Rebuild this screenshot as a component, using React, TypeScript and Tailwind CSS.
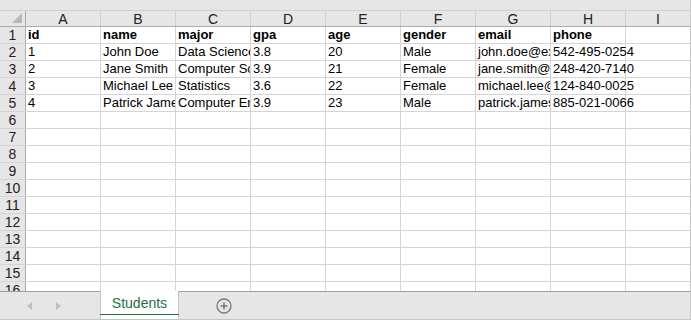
const cols = ["A", "B", "C", "D", "E", "F", "G", "H"];

const rows: string[][] = [
  ["id", "name", "major", "gpa", "age", "gender", "email", "phone"],
  ["1", "John Doe", "Data Science", "3.8", "20", "Male", "john.doe@example.com", "542-495-0254"],
  ["2", "Jane Smith", "Computer Science", "3.9", "21", "Female", "jane.smith@example.com", "248-420-7140"],
  ["3", "Michael Lee", "Statistics", "3.6", "22", "Female", "michael.lee@example.com", "124-840-0025"],
  ["4", "Patrick James", "Computer Engineering", "3.9", "23", "Male", "patrick.james@example.com", "885-021-0066"],
];

const rowCount = 16;

export default function App() {
  return (
    <div
      className="w-[691px] h-[320px] flex flex-col bg-white overflow-hidden text-[13px] text-black"
      style={{ fontFamily: '"Liberation Sans", Arial, sans-serif' }}
    >
      {/* sheet area */}
      <div className="h-[291px] overflow-hidden border-r border-[#c6c6c6]">
        {/* top band */}
        <div className="h-[11px] bg-[#e6e6e6] border-b border-[#d0d0d0]" />

        {/* column headers */}
        <div className="flex h-[16px] bg-[#e6e6e6] border-b border-[#ababab]">
          <div className="w-[26px] shrink-0 border-r border-[#ababab] relative">
            <svg width="12" height="12" className="absolute left-[11px] top-[1px]" viewBox="0 0 12 12">
              <polygon points="11,1 11,11 1,11" fill="#b8b8b8" />
            </svg>
          </div>
          {cols.map((c) => (
            <div
              key={c}
              className="w-[75px] shrink-0 border-r border-[#d0d0d0] flex items-center justify-center text-[14px] text-[#222] leading-none"
            >
              {c}
            </div>
          ))}
          <div className="flex-1 flex items-center justify-center text-[14px] text-[#222] leading-none">I</div>
        </div>

        {/* rows */}
        {Array.from({ length: rowCount }).map((_, r) => {
          const data = rows[r];
          return (
            <div key={r} className="flex h-[17px] border-b border-[#d4d4d4]">
              <div className="w-[26px] shrink-0 bg-[#e6e6e6] border-r border-[#ababab] flex items-center justify-center text-[14px] text-[#222] leading-none">
                {r + 1}
              </div>
              {cols.map((c, i) => (
                <div
                  key={c}
                  className={`w-[75px] shrink-0 border-r border-[#d4d4d4] pl-[2px] whitespace-nowrap leading-[16px] ${
                    i === cols.length - 1 ? "overflow-visible relative z-10" : "overflow-hidden"
                  } ${r === 0 ? "font-bold" : ""}`}
                >
                  {data ? data[i] : ""}
                </div>
              ))}
              <div className={`flex-1 ${data ? "" : ""}`} />
            </div>
          );
        })}
      </div>

      {/* tab bar */}
      <div className="h-[29px] flex bg-[#e6e6e6] border-t border-[#9f9f9f] border-r border-r-[#c6c6c6] border-b border-b-[#c6c6c6]">
        <div className="w-[100px] shrink-0 flex items-center">
          <svg width="6" height="8" viewBox="0 0 6 8" className="ml-[27px]">
            <polygon points="5,0 5,8 0,4" fill="#c0c0c0" />
          </svg>
          <svg width="6" height="8" viewBox="0 0 6 8" className="ml-[22px]">
            <polygon points="1,0 1,8 6,4" fill="#c0c0c0" />
          </svg>
        </div>
        <div className="-mt-px w-[79px] shrink-0 bg-white border-l border-r border-[#c6c6c6] flex flex-col">
          <div className="flex-1 flex items-center justify-center text-[14px] text-[#217346] pt-[2px]">Students</div>
          <div className="h-[2px] mx-[-1px] bg-[#217346] mb-[4px]" />
        </div>
        <div className="flex-1 flex items-center pl-[37px]">
          <svg width="16" height="16" viewBox="0 0 16 16">
            <circle cx="8" cy="8" r="7" fill="none" stroke="#7a7a7a" strokeWidth="1.3" />
            <path d="M8 4.5v7M4.5 8h7" stroke="#7a7a7a" strokeWidth="1.6" />
          </svg>
        </div>
      </div>
    </div>
  );
}
